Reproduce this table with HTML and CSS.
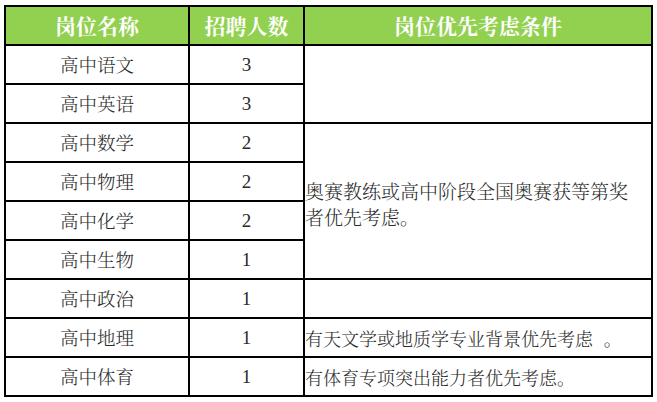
FILE: index.html
```html
<!DOCTYPE html>
<html lang="zh-CN">
<head>
<meta charset="utf-8">
<title>岗位</title>
<link rel="stylesheet" href="styles.css">
</head>
<body>
<div class="wrap">
<table class="grid">
  <colgroup>
    <col class="c-name">
    <col class="c-num">
    <col class="c-cond">
  </colgroup>
  <thead>
    <tr class="head">
      <th>岗位名称</th>
      <th>招聘人数</th>
      <th>岗位优先考虑条件</th>
    </tr>
  </thead>
  <tbody>
    <tr><td class="name">高中语文</td><td class="num">3</td><td class="cond" rowspan="2"></td></tr>
    <tr><td class="name">高中英语</td><td class="num">3</td></tr>
    <tr><td class="name">高中数学</td><td class="num">2</td><td class="cond big" rowspan="4"><div class="cond-text">奥赛教练或高中阶段全国奥赛获等第奖者优先考虑。</div></td></tr>
    <tr><td class="name">高中物理</td><td class="num">2</td></tr>
    <tr><td class="name">高中化学</td><td class="num">2</td></tr>
    <tr><td class="name">高中生物</td><td class="num">1</td></tr>
    <tr><td class="name">高中政治</td><td class="num">1</td><td class="cond"></td></tr>
    <tr><td class="name">高中地理</td><td class="num">1</td><td class="cond">有天文学或地质学专业背景优先考虑 。</td></tr>
    <tr><td class="name">高中体育</td><td class="num">1</td><td class="cond">有体育专项突出能力者优先考虑。</td></tr>
  </tbody>
</table>
</div>
</body>
</html>
```

FILE: styles.css
```css
html, body {
  margin: 0;
  padding: 0;
  background: #ffffff;
}

.wrap {
  padding: 5px 0 0 4px;
}

.grid {
  border-collapse: collapse;
  table-layout: fixed;
  width: 647px;
  font-family: "Noto Serif CJK SC", "Noto Sans CJK SC", serif;
  color: #2a2a2a;
}

.c-name { width: 184px; }
.c-num { width: 115px; }
.c-cond { width: 348px; }

.grid th,
.grid td {
  border: 2px solid #000;
  padding: 0;
  height: 39px;
  box-sizing: border-box;
}

.head th {
  background: #92d050;
  color: #ffffff;
  font-weight: 700;
  font-size: 21px;
  text-align: center;
  line-height: 1;
}

.name {
  text-align: center;
  font-size: 18.5px;
  font-weight: 300;
  line-height: 1;
}

.num {
  text-align: center;
  font-family: "Liberation Serif", serif;
  font-size: 19px;
  line-height: 1;
}

.cond {
  text-align: left;
  font-size: 18px;
  font-weight: 300;
  word-spacing: 6px;
  padding: 0 2px 0 0 !important;
  line-height: 1;
}

.cond.big {
  vertical-align: middle;
}

.cond-text {
  font-size: 19px;
  width: 330px;
  line-height: 26px;
  padding-top: 6px;
}
```
